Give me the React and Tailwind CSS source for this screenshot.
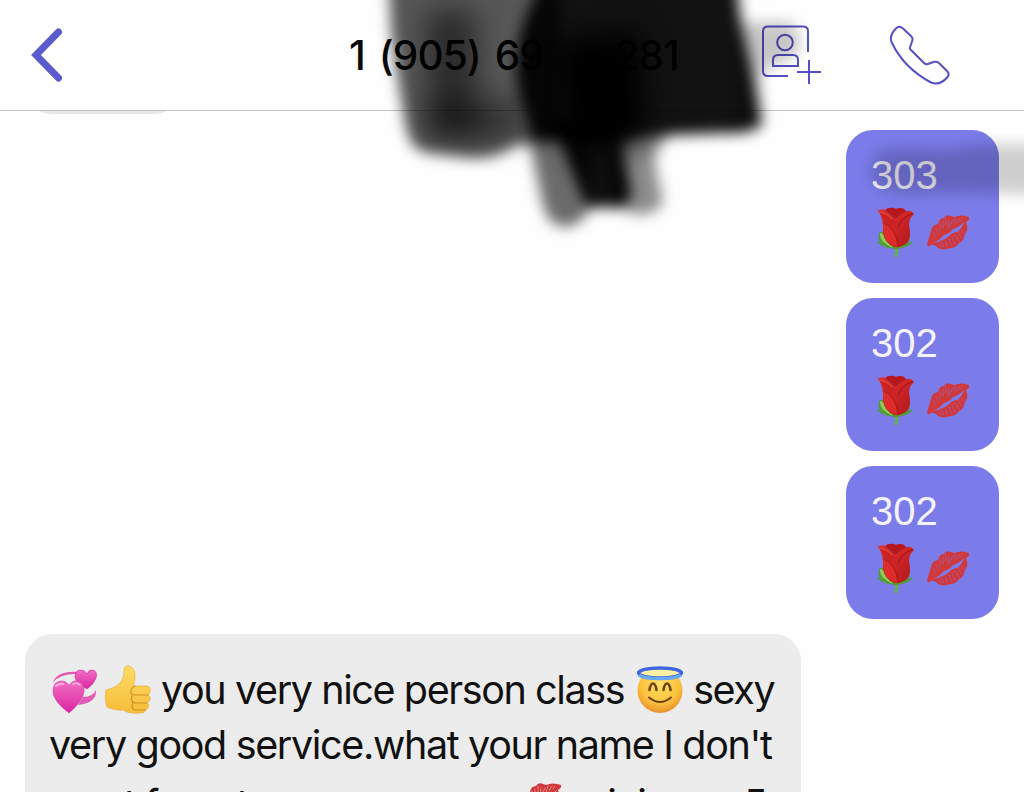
import React from 'react';

const sent = ['303', '302', '302'];

function Rose() {
    return (
        <svg viewBox="0 0 48 54" className="w-12 h-[54px] shrink-0">
            <defs>
                <linearGradient id="petal" x1="0" y1="0" x2="1" y2="1">
                    <stop offset="0" stopColor="#e23431" />
                    <stop offset="1" stopColor="#b3161b" />
                </linearGradient>
            </defs>
            <path d="M24 40 Q25 47 23 52 L26 52 Q28 46 27 40 Z" fill="#62b53e" />
            <path d="M9 27 Q6 32 9 36 L6 37 Q12 43 25 44 Q36 43 42 37 L37 38 Q40 35 38 30 Z" fill="#4f9d35" />
            <path d="M9 28 Q8 37 22 43 L14 30 Z" fill="#8ccc5c" />
            <path d="M7 6 Q9 3 14 5 Q19 1 25 4 Q31 1 35 6 Q40 5 43 9 Q38 13 38 20 Q41 33 36 38 Q30 43 23 42 Q13 38 12 27 Q13 14 7 6 Z" fill="url(#petal)" />
            <path d="M14 5 Q19 1 25 4 Q31 1 35 6 Q29 9 25 14 Q19 9 14 5 Z" fill="#b5191d" />
            <path d="M7 6 Q15 6 21 13 Q27 20 28 30 Q20 20 13 17 Q12 11 7 6 Z" fill="#cb2225" />
            <path d="M13 18 Q24 23 27 42 Q14 39 12 28 Z" fill="#dd2d2b" />
            <path d="M42 9 Q31 11 27 22" fill="none" stroke="#9d1318" strokeWidth="1" />
            <path d="M13 18 Q25 23 27 42" fill="none" stroke="#a4151a" strokeWidth="0.9" />
            <path d="M8 7 Q16 8 21 14" fill="none" stroke="#ef5a52" strokeWidth="0.9" />
        </svg>
    );
}

function Lips({ cracks = '#7b7be9' }) {
    return (
        <svg viewBox="0 0 44 40" className="w-11 h-10 shrink-0">
            <path d="M1 32 Q3 26 5 19 Q6 13 12 12 Q13 6 18 6 Q20 2 25 4 L28 5 Q35 2 43 5 Q44 8 40 10 Q43 17 39 22 Q38 29 33 31 Q29 37 23 36 Q16 40 10 34 Q5 31 2 35 Z" fill="#d2383a" />
            <path d="M7 31 Q14 28 18 23 Q23 22 27 17 Q33 15 39 10 Q35 16 32 20 Q26 20 22 25 Q15 30 7 31 Z" fill={cracks} />
            <g stroke={cracks} strokeWidth="0.8" strokeLinecap="round" opacity="0.6">
                <path d="M7 20 L9 26 M10 16 L12 22 M14 11 L14 19 M17 9 L17 16 M20 6 L20 13 M23 8 L22 17 M27 8 L24 14 M30 6 L28 12 M34 6 L31 11 M37 6 L35 9" />
                <path d="M13 32 L15 35 M16 30 L18 36 M20 29 L21 35 M23 27 L25 34 M26 25 L29 32 M29 23 L33 29 M32 21 L36 26 M35 17 L38 21" />
            </g>
        </svg>
    );
}

function Hearts() {
    return (
        <svg viewBox="0 0 48 48" className="w-12 h-12 shrink-0">
            <defs>
                <linearGradient id="pink" x1="0" y1="0" x2="0" y2="1">
                    <stop offset="0" stopColor="#f26fc2" />
                    <stop offset="1" stopColor="#dc24a4" />
                </linearGradient>
            </defs>
            <path d="M3 16 Q8 4 29 6 L28 8 Q12 7 3 16 Z" fill="#e05aae" />
            <path d="M46 24 Q47 37 28 39 L33 31 Q43 31 46 24 Z" fill="#e25ab4" />
            <path d="M37 23 Q26 17 25 11 Q25 4 31 4 Q35 4 37 8 Q39 3 43 4 Q48 6 46 12 Q44 18 37 23 Z" fill="url(#pink)" stroke="#c92a93" strokeWidth="0.6" />
            <path d="M19 47 Q3 35 3 25 Q3 16 11 15 Q17 15 19 20 Q22 14 28 15 Q35 17 34 26 Q32 36 19 47 Z" fill="url(#pink)" stroke="#d42c9d" strokeWidth="0.6" />
            <path d="M6 20 Q9 17 13 18" fill="none" stroke="#fbb3e1" strokeWidth="2" strokeLinecap="round" />
            <path d="M23 18 Q27 16 30 19" fill="none" stroke="#fbb3e1" strokeWidth="1.5" strokeLinecap="round" />
        </svg>
    );
}

function ThumbsUp() {
    return (
        <svg viewBox="0 0 48 50" className="w-12 h-[50px] shrink-0">
            <defs>
                <linearGradient id="hand" x1="0" y1="0" x2="0" y2="1">
                    <stop offset="0" stopColor="#ffdc66" />
                    <stop offset="1" stopColor="#f6bd38" />
                </linearGradient>
            </defs>
            <path d="M2 25 Q12 23 17 17 Q21 11 20 5 Q21 0 25 1 Q31 3 31 11 Q31 16 29 21 L43 21 Q47 22 46 26 Q46 29 44 30 Q47 32 46 35 Q45 37 43 38 Q46 40 44 43 Q43 45 41 45 Q42 48 36 48 Q25 49 19 45 Q11 46 3 42 Q0 34 2 25 Z" fill="url(#hand)" stroke="#e8ac3a" strokeWidth="0.7" />
            <g fill="none" stroke="#cc8f28" strokeWidth="1.1" strokeLinecap="round">
                <path d="M44 30 H31 Q26 30 27 26 Q27 23 31 21" />
                <path d="M43 38 H31 Q26 37 28 31" />
                <path d="M41 45 H32 Q26 44 29 38" />
            </g>
        </svg>
    );
}

function Angel() {
    return (
        <svg viewBox="0 0 48 48" className="w-12 h-12 shrink-0">
            <defs>
                <radialGradient id="face" cx="0.5" cy="0.35" r="0.65">
                    <stop offset="0" stopColor="#ffe167" />
                    <stop offset="0.65" stopColor="#fbc23d" />
                    <stop offset="1" stopColor="#e8922b" />
                </radialGradient>
            </defs>
            <circle cx="24" cy="24.500" r="22.500" fill="url(#face)" />
            <ellipse cx="24" cy="7" rx="19" ry="3.500" fill="#fff0a6" />
            <ellipse cx="24" cy="7" rx="21.500" ry="5" fill="none" stroke="#3f66e0" strokeWidth="3.400" />
            <path d="M3 9 Q7 12.500 24 12.500 Q41 12.500 45 9" fill="none" stroke="#69a9f5" strokeWidth="3.400" />
            <g fill="none" stroke="#6b430f" strokeWidth="2.600" strokeLinecap="round">
                <path d="M13.500 24 Q14.500 17.500 17 17.500 Q19.500 17.500 20.500 24" />
                <path d="M27.500 24 Q28.500 17.500 31 17.500 Q33.500 17.500 34.500 24" />
                <path d="M13 31.500 Q24 40.500 35 31.500" strokeWidth="2" />
            </g>
        </svg>
    );
}

// Soft marker strokes painted over the header and the first bubble
function Marker() {
    return (
        <svg viewBox="0 0 1024 792" className="absolute inset-0 w-full h-full pointer-events-none">
            <defs>
                <filter id="soft" x="-20%" y="-20%" width="140%" height="140%">
                    <feGaussianBlur stdDeviation="7" />
                </filter>
                <filter id="softer" x="-50%" y="-50%" width="200%" height="200%">
                    <feGaussianBlur stdDeviation="14" />
                </filter>
            </defs>
            <g filter="url(#soft)">
                <path d="M388 -30 H560 V142 L515 145 Q490 162 465 157 L425 152 Q411 148 407 130 Q397 80 391 30 Z" opacity="0.66" />
                <path d="M525 120 L590 130 L590 208 Q578 230 560 226 Q546 222 542 200 Z" opacity="0.58" />
                <path d="M610 130 H675 Q655 146 654 160 L663 202 Q655 216 635 214 L610 205 Z" opacity="0.45" />
                <path d="M555 120 H618 L632 195 Q624 212 610 207 L588 208 Q572 180 555 120 Z" opacity="0.94" />
                <path d="M550 -30 H735 L741 22 L750 60 L762 124 Q750 135 725 133 L645 136 L540 140 Q516 110 516 60 Q520 15 550 -30 Z" opacity="0.93" />
                <path d="M735 22 H790 Q806 40 795 55 Q770 66 760 75 L762 130 H735 Z" opacity="0.22" />
            </g>
            <g filter="url(#softer)">
                <path d="M425 10 H475 L480 138 H430 Z" opacity="0.5" />
                <path d="M420 100 H525 L515 140 H430 Z" opacity="0.4" />
                <path d="M555 40 L640 30 L645 145 L565 145 Z" />
            </g>
            <path d="M878 152 Q900 146 945 150 L985 144 H1060 V196 L970 192 L900 193 Q872 190 870 170 Z" filter="url(#soft)" opacity="0.18" />
        </svg>
    );
}

function Header() {
    return (
        <header className="h-[111px] shrink-0 border-b border-[#c4c4c4] flex items-center justify-between pl-[31px] pr-[74px]">
            <svg viewBox="0 0 32 54" className="w-8 h-[54px]" fill="none" stroke="#5b5bcd" strokeWidth="7" strokeLinecap="round">
                <path d="M27.500 4 L5 27 L27.500 50" />
            </svg>
            <h1 className="w-[330px] ml-[204px] mt-0.5 flex justify-between whitespace-pre text-[40.500px] font-medium leading-none tracking-[-0.900px] [word-spacing:4px] text-[#0a0a0a] font-['Inter','Liberation_Sans',sans-serif]">
                <span>1 (905) 69</span>
                <span>281</span>
            </h1>
            <div className="flex items-center gap-[69px] text-[#5650c4]">
                <svg viewBox="0 0 60 60" className="w-[60px] h-[60px]" fill="none" stroke="currentColor" strokeWidth="2">
                    <path d="M27 51 H7 Q2 51 2 46 V6 Q2 1.500 7 1.500 H42 Q47 1.500 47 6 V27" />
                    <circle cx="24" cy="17.500" r="7.800" />
                    <path d="M12 41 V35 Q12 30 17 30 H32 Q37 30 37 35 V41 Z" />
                    <path d="M48 35 V59 M36 47 H60" />
                </svg>
                <svg viewBox="0 0 60 60" className="w-[60px] h-[60px]" fill="none" stroke="currentColor" strokeWidth="2" strokeLinejoin="round">
                    <path d="M6 3.500 Q9 0 13 3.500 L21 11 Q23.500 13.500 22 16.500 L20 22.500 Q19.500 24 21 25 L34 38 Q36 40 38 39 L42 37.500 Q46 36 49 38 L57 46 Q60 49 57.500 52 Q50 61 41 57.500 Q14 43 2 18 Q-1.500 11 6 3.500 Z" />
                </svg>
            </div>
        </header>
    );
}

export default function App() {
    return (
        <div className="relative w-[1024px] h-[792px] overflow-hidden flex flex-col bg-[#fefefe] font-['Liberation_Sans',sans-serif]">
            <Header />

            <main className="flex-1 min-h-0 overflow-hidden flex flex-col">
                <div className="h-[3px] shrink-0 overflow-hidden ml-[25px] flex items-end">
                    <div className="w-[156px] h-[54px] shrink-0 rounded-[27px] bg-[#e6e6e6]" />
                </div>

                <div className="mt-4 mr-[25px] flex flex-col items-end gap-[15px]">
                    {sent.map((text, i) => (
                        <div key={i} className="w-[153px] h-[153px] rounded-[27px] bg-[#7b7be9] pl-[25px] pt-[21px]">
                            <p className="text-[40px] leading-[48px] text-[#f4f4ff]">{text}</p>
                            <div className="flex items-center gap-[7px] mt-1.5">
                                <Rose />
                                <Lips />
                            </div>
                        </div>
                    ))}
                </div>

                <div className="mt-[15px] ml-[25px] w-[776px] h-[240px] shrink-0 rounded-[27px] bg-[#ececec] px-[25px] pt-7 text-[39.500px] leading-[55px] text-[#111] whitespace-nowrap font-['Inter','Liberation_Sans',sans-serif]">
                    <div className="h-[55px] flex items-center">
                        <Hearts />
                        <span className="ml-1.5"><ThumbsUp /></span>
                        <span className="ml-[9px] mt-0.5 tracking-[-1.400px]">you very nice person class</span>
                        <span className="ml-3"><Angel /></span>
                        <span className="ml-[9px] mt-0.5 tracking-[-1.400px]">sexy</span>
                    </div>
                    <div className="h-[55px] pt-px -ml-px tracking-[-1.350px]">very good service.what your name I don't</div>
                    <div className="h-[55px] flex items-start tracking-[-1.400px]">
                        <span className="w-[468px] mt-[5px]">want forget</span>
                        <span className="mt-2"><Lips cracks="#f1d9d4" /></span>
                        <span className="ml-3 mt-[5px]">minimum 5</span>
                    </div>
                </div>
            </main>

            <Marker />
        </div>
    );
}
